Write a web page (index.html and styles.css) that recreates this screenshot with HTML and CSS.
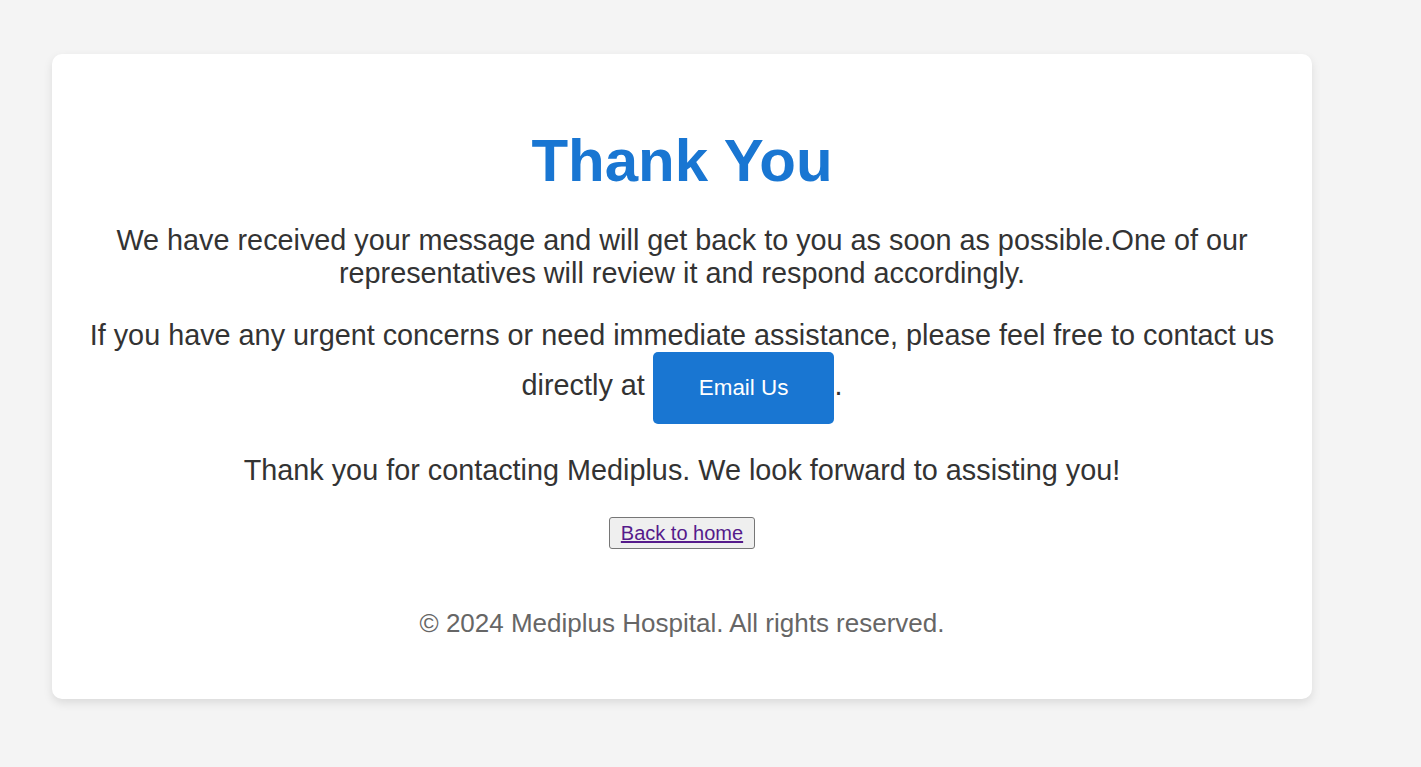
FILE: index.html
```html
<!DOCTYPE html>
<html lang="en">
<head>
<meta charset="utf-8">
<title>Thank You - Mediplus</title>
<link rel="stylesheet" href="styles.css">
</head>
<body>
<div class="card">
  <h1 class="title">Thank You</h1>
  <p class="msg">We have received your message and will get back to you as soon as possible.One of our representatives will review it and respond accordingly.</p>
  <p class="msg msg-contact">If you have any urgent concerns or need immediate assistance, please feel free to contact us directly at <a class="email-btn" href="#">Email Us</a>.</p>
  <p class="msg msg-thanks">Thank you for contacting Mediplus. We look forward to assisting you!</p>
  <div class="home-row"><button class="home-btn" type="button"><a class="home-link" href="#">Back to home</a></button></div>
  <footer class="foot">&copy; 2024 Mediplus Hospital. All rights reserved.</footer>
</div>
</body>
</html>
```

FILE: styles.css
```css
html, body {
  margin: 0;
  padding: 0;
}
body {
  background: #f4f4f4;
  font-family: "Liberation Sans", Arial, sans-serif;
  color: #333333;
  padding: 54px 52px;
}
.card {
  width: 1260px;
  box-sizing: border-box;
  background: #ffffff;
  border-radius: 10px;
  box-shadow: 0 4px 10px rgba(0, 0, 0, 0.1);
  padding: 72px 30px 60px;
  text-align: center;
}
.title {
  margin: 0;
  font-size: 60px;
  font-weight: bold;
  color: #1976d2;
}
.msg {
  font-size: 28.8px;
  margin: 28.8px 0;
}
.msg-thanks {
  margin-top: 30.8px;
}
.email-btn {
  display: inline-block;
  background: #1976d2;
  color: #ffffff;
  text-decoration: none;
  font-size: 22.4px;
  padding: 23px 46px;
  border-radius: 5px;
}
.home-row {
  margin: 30px 0 0;
}
.home-btn {
  font-family: "Liberation Sans", Arial, sans-serif;
  font-size: 20px;
  height: 32px;
  box-sizing: border-box;
  background: #efefef;
  border: 1px solid #767676;
  border-radius: 3px;
  padding: 0 11px;
  vertical-align: top;
}
.home-link {
  color: #551a8b;
}
.foot {
  margin-top: 59px;
  font-size: 26px;
  color: #666666;
}
```
